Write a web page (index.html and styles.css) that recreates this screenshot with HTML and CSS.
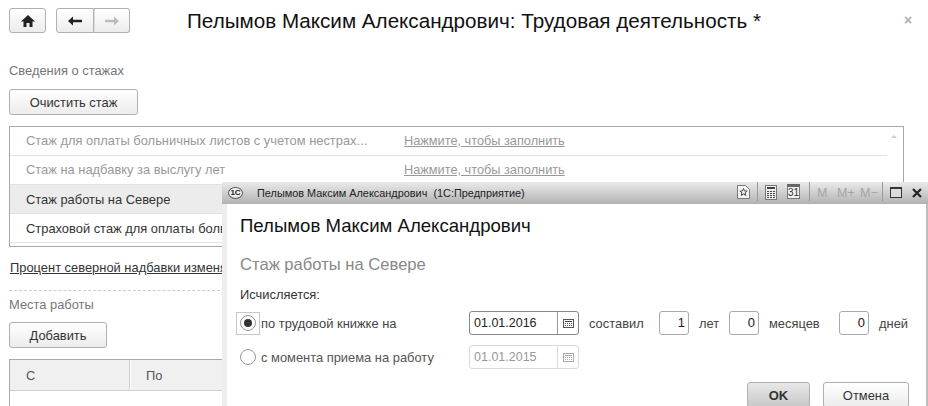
FILE: index.html
```html
<!DOCTYPE html>
<html lang="ru">
<head>
<meta charset="utf-8">
<title>Трудовая деятельность</title>
<link rel="stylesheet" href="styles.css">
</head>
<body>
<div class="page">
  <header class="top">
    <button class="btn icon-btn home"><svg width="16" height="14" viewBox="0 0 16 14"><path d="M8 1 1 7.500h2.500V13h3V9h3v4h3V7.500H15z" fill="#222"/></svg></button>
    <div class="nav">
      <button class="btn icon-btn nav-b"><svg width="16" height="12" viewBox="0 0 16 12"><path d="M1 6l5-4.500V4.700h9v2.600H6v3.200z" fill="#222"/></svg></button>
      <button class="btn icon-btn nav-f"><svg width="16" height="12" viewBox="0 0 16 12"><path d="M15 6l-5-4.500V4.700H1v2.600h9v3.200z" fill="#bbb"/></svg></button>
    </div>
    <h1 class="title">Пелымов Максим Александрович: Трудовая деятельность *</h1>
    <span class="close">×</span>
  </header>

  <div class="cap first">Сведения о стажах</div>
  <button class="btn action clear">Очистить стаж</button>

  <div class="list">
    <div class="row muted"><span class="c1">Стаж для оплаты больничных листов с учетом нестрах...</span><span class="c2">Нажмите, чтобы заполнить</span></div>
    <div class="row muted"><span class="c1">Стаж на надбавку за выслугу лет</span><span class="c2">Нажмите, чтобы заполнить</span></div>
    <div class="row sel"><span class="c1">Стаж работы на Севере</span></div>
    <div class="row"><span class="c1">Страховой стаж для оплаты боль</span></div>
    <span class="scroll-up"></span>
  </div>

  <a class="percent">Процент северной надбавки изменя</a>
  <div class="dash"></div>
  <div class="cap second">Места работы</div>
  <button class="btn action add">Добавить</button>

  <div class="grid">
    <div class="ghead"><span class="g1">С</span><span class="g2">По</span></div>
    <div class="gbody"></div>
  </div>
</div>

<section class="win">
  <div class="bar">
    <span class="logo">1<b>С</b></span>
    <span class="wtitle">Пелымов Максим Александрович  (1С:Предприятие)</span>
    <div class="tools">
      <svg class="t-star" width="13" height="14" viewBox="0 0 13 14"><path d="M.5.5h8l4 4v9H.5z" fill="#f4f4f4" stroke="#777"/><path d="M6.500 3.500l1 2.400 2.600.2-2 1.700.7 2.600-2.300-1.400-2.300 1.400.7-2.600-2-1.700 2.600-.2z" fill="none" stroke="#444"/></svg>
      <i class="sep"></i>
      <svg class="t-calc" width="12" height="15" viewBox="0 0 12 15"><rect x=".5" y=".5" width="11" height="14" fill="#eee" stroke="#777"/><path d="M2 2h8v2H2zM2 6h2v1H2zM5 6h2v1H5zM8 6h2v1H8zM2 8h2v1H2zM5 8h2v1H5zM8 8h2v1H8zM2 10h2v1H2zM5 10h2v1H5zM8 10h2v1H8zM2 12h2v1H2zM5 12h2v1H5zM8 12h2v1H8z" fill="#444"/></svg>
      <span class="cal"><span>31</span></span>
      <i class="sep"></i>
      <span class="m m1">M</span><span class="m m2">M+</span><span class="m m3">M−</span>
      <i class="sep"></i>
      <span class="max"></span>
      <svg class="t-x" width="10" height="10" viewBox="0 0 10 10"><path d="M1 1l8 8M9 1 1 9" stroke="#222" stroke-width="2.200"/></svg>
    </div>
  </div>
  <div class="wbody">
    <h2 class="person">Пелымов Максим Александрович</h2>
    <h3 class="sub">Стаж работы на Севере</h3>
    <div class="calc">Исчисляется:</div>
    <div class="line l1">
      <span class="focus"><span class="radio on"></span></span>
      <span class="rlabel r1">по трудовой книжке на</span>
      <div class="date"><span class="dval">01.01.2016</span><span class="dbtn"><svg width="11" height="9" viewBox="0 0 11 9"><rect x=".5" y=".5" width="10" height="8" fill="#fff" stroke="#555"/><path d="M2 2h7v1H2zM2 4h1v1H2zM4 4h1v1H4zM6 4h1v1H6zM8 4h1v1H8zM2 6h1v1H2zM4 6h1v1H4zM6 6h1v1H6zM8 6h1v1H8z" fill="#444"/></svg></span></div>
      <span class="w sost">составил</span>
      <span class="num">1</span><span class="w let">лет</span>
      <span class="num">0</span><span class="w mes">месяцев</span>
      <span class="num">0</span><span class="w dn">дней</span>
    </div>
    <div class="line l2">
      <span class="radio"></span>
      <span class="rlabel r2">с момента приема на работу</span>
      <div class="date off"><span class="dval">01.01.2015</span><span class="dbtn"><svg width="11" height="9" viewBox="0 0 11 9"><rect x=".5" y=".5" width="10" height="8" fill="#fff" stroke="#aaa"/><path d="M2 2h7v1H2zM2 4h1v1H2zM4 4h1v1H4zM6 4h1v1H6zM8 4h1v1H8zM2 6h1v1H2zM4 6h1v1H4zM6 6h1v1H6zM8 6h1v1H8z" fill="#aaa"/></svg></span></div>
    </div>
    <div class="foot">
      <button class="btn ok">OK</button>
      <button class="btn cancel">Отмена</button>
    </div>
  </div>
</section>
</body>
</html>
```
FILE: styles.css
```css
* { box-sizing: border-box; }
html, body { margin: 0; height: 100%; overflow: hidden; background: #fff; }
body { position: relative; font: 12.900px "Liberation Sans", Arial, sans-serif; color: #333; width: 928px; height: 406px; }
.page { padding: 8px 24px 0 9px; height: 406px; overflow: hidden; }
.btn {
  display: inline-flex; align-items: center; justify-content: center; padding: 0;
  border: 1px solid #b0b0b0; border-radius: 3px;
  background: linear-gradient(#fff, #ececec);
  font: inherit; color: #333;
}
.top { display: flex; align-items: center; height: 25px; position: relative; }
.home { width: 37px; height: 25px; }
.nav { display: flex; margin-left: 10px; width: 74px; }
.nav-b { width: 38px; height: 25px; border-radius: 3px 0 0 3px; }
.nav-f { width: 36px; height: 25px; border-left: 0; border-radius: 0 3px 3px 0; box-shadow: inset 1px 0 0 #ddd; }
.title { margin: 0 0 0 57px; font-weight: 400; font-size: 20.650px; color: #111; white-space: nowrap; line-height: 25px; }
.close { position: absolute; left: 895px; top: 3px; color: #b0b0b0; font-size: 14px; line-height: 18px; font-weight: 700; }
.cap { color: #777; line-height: 16px; }
.first { margin-top: 30px; }
.action { display: flex; height: 26px; }
.clear { width: 129px; margin-top: 10px; }
.list { margin-top: 11px; width: 895px; height: 121px; border: 1px solid #a8a8a8; position: relative; }
.row { height: 29px; width: 877px; border-bottom: 1px solid #e2e2e2; display: flex; align-items: center; color: #333; }
.row.muted { color: #999; padding-bottom: 1px; }
.row.sel { background: #ececec; }
.c1 { margin-left: 16px; width: 378px; white-space: nowrap; overflow: hidden; }
.c2 { text-decoration: underline; font-size: 12.750px; }
.scroll-up { position: absolute; right: 6px; top: 8px; border: 3px solid transparent; border-bottom-color: #ccc; border-top: 0; }
.percent { display: block; margin: 13px 0 0 1px; line-height: 16px; text-decoration: underline; color: #333; white-space: nowrap; }
.dash { margin-top: 14px; width: 216px; border-top: 1px dashed #ccc; }
.second { margin-top: 6px; }
.add { width: 98px; margin-top: 9px; }
.grid { margin-top: 11px; width: 895px; height: 60px; border: 1px solid #aaa; }
.ghead { display: flex; height: 31px; background: #f0f0f0; border-bottom: 1px solid #d0d0d0; align-items: center; color: #555; }
.g1 { width: 120px; padding-left: 16px; height: 100%; display: flex; align-items: center; border-right: 1px solid #d0d0d0; box-shadow: 1px 0 0 #fff; }
.g2 { padding-left: 16px; }

.win { position: absolute; left: 222px; top: 182px; width: 706px; height: 240px; background: #fff; border-left: 5px solid; border-image: linear-gradient(90deg, #eee, #bdbdbd 40%, #bdbdbd) 1; border-right: 2px solid #b8b8b8; border-top: 0; border-bottom: 0; }
.bar { height: 22px; background: linear-gradient(#eaeaea, #b2b2b2); display: flex; align-items: center; position: relative; margin-left: -5px; margin-right: -2px; }
.logo { margin-left: 6px; width: 15px; height: 12px; border: 1px solid #555; border-radius: 50%; background: #eee; font-size: 8px; font-weight: 700; text-align: center; line-height: 10px; color: #222; white-space: nowrap; }
.logo b { font-weight: 700; }
.wtitle { margin-left: 14px; font-size: 10.900px; color: #222; white-space: pre; }
.tools { position: absolute; left: 0; top: 0; width: 100%; height: 22px; }
.tools > * { position: absolute; }
.t-star { left: 515px; top: 3px; }
.sep { width: 1px; height: 19px; top: 0; background: #999; }
.sep:nth-of-type(1) { left: 535px; }
.sep:nth-of-type(2) { left: 587px; }
.sep:nth-of-type(3) { left: 660px; }
.t-calc { left: 543px; top: 3px; }
.cal { left: 565px; top: 2px; width: 13px; height: 15px; border: 1px solid #777; border-top: 3px solid #666; background: #f0f0f0; font-size: 10px; line-height: 12px; text-align: center; color: #333; }
.m { top: 4px; color: #a4a4a4; font-size: 12.500px; line-height: 15px; }
.m1 { left: 595px; } .m2 { left: 615px; } .m3 { left: 638px; }
.max { left: 668px; top: 5px; width: 12px; height: 11px; border: 1px solid #333; border-top-width: 2px; background: #dcdcdc; }
.t-x { left: 690px; top: 6px; }

.wbody { position: relative; height: 218px; padding: 12px 0 0 13px; }
.person { margin: 0; font-weight: 400; font-size: 18.600px; line-height: 20px; color: #111; }
.sub { margin: 20px 0 0; font-weight: 400; font-size: 16.600px; line-height: 18px; color: #888; }
.calc { margin-top: 13px; line-height: 15px; }
.line { display: flex; align-items: center; height: 24px; position: relative; }
.l1 { margin-top: 9px; margin-left: -4px; }
.l2 { margin-top: 10px; }
.focus { width: 24px; height: 23px; border: 1px solid #c8c8c8; display: flex; align-items: center; justify-content: center; flex: none; }
.radio { width: 16px; height: 16px; border: 1px solid #999; border-radius: 50%; background: #fff; display: block; flex: none; position: relative; }
.radio.on::after { content: ""; position: absolute; left: 3px; top: 3px; width: 8px; height: 8px; border-radius: 50%; background: #333; }
.rlabel { color: #444; white-space: nowrap; }
.r1 { margin-left: 1px; width: 208px; }
.r2 { margin-left: 5px; width: 208px; color: #555; }
.date { width: 110px; height: 24px; border: 1px solid #888; border-radius: 3px; display: flex; align-items: center; color: #222; flex: none; font-size: 12.500px; }
.date.off { border-color: #dadada; color: #999; }
.dval { width: 87px; padding-left: 4px; }
.dbtn { flex: 1; height: 100%; border-left: 1px solid #999; display: flex; align-items: center; justify-content: center; }
.off .dbtn { border-left-color: #dadada; }
.w { color: #444; white-space: nowrap; }
.sost { margin-left: 10px; width: 70px; }
.num { width: 30px; height: 24px; border: 1px solid #aaa; border-radius: 3px; text-align: right; padding-right: 3px; line-height: 22px; color: #222; flex: none; }
.let { margin-left: 10px; width: 30px; }
.mes { margin-left: 10px; width: 70px; }
.dn { margin-left: 10px; }
.foot { position: absolute; left: 520px; top: 178px; display: flex; gap: 13px; }
.ok { width: 63px; height: 26px; font-weight: 700; font-size: 13px; color: #333; background: linear-gradient(#e8e8e8, #c8c8c8); }
.cancel { width: 86px; height: 26px; }
```
